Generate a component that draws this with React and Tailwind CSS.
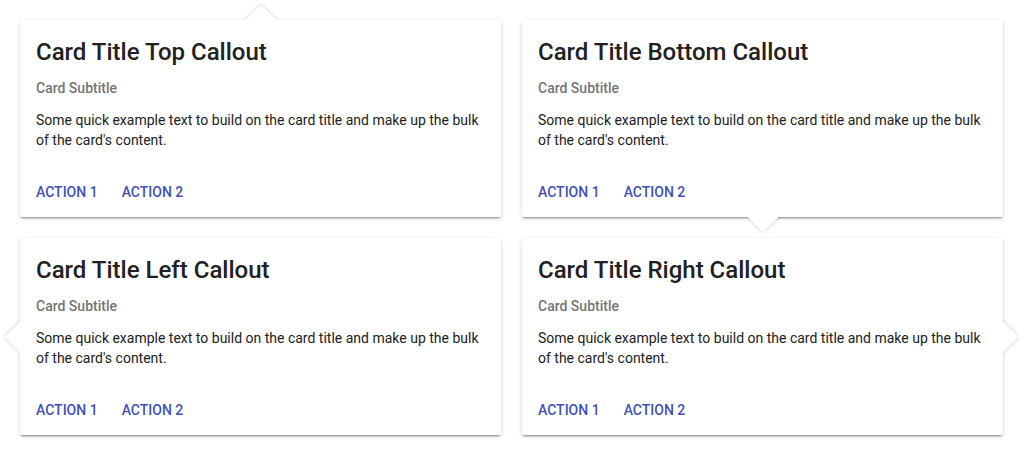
import React from "react";

const shadow =
  "shadow-[0_2px_2px_0_rgba(0,0,0,0.14),0_3px_1px_-2px_rgba(0,0,0,0.2),0_1px_5px_0_rgba(0,0,0,0.12)]";
const arrowShadow = "shadow-[0_0_4px_0_rgba(0,0,0,0.22)]";

function Arrow({ side }) {
  if (side === "top")
    return (
      <div className="absolute left-1/2 -translate-x-1/2 -top-[16px] w-[36px] h-[16px] overflow-hidden">
        <div className={`absolute left-1/2 top-[16px] w-[22px] h-[22px] bg-white rotate-45 -translate-x-1/2 -translate-y-1/2 ${arrowShadow}`} />
      </div>
    );
  if (side === "bottom")
    return (
      <div className="absolute left-1/2 -translate-x-1/2 top-full w-[36px] h-[16px] overflow-hidden">
        <div className={`absolute left-1/2 top-0 w-[22px] h-[22px] bg-white rotate-45 -translate-x-1/2 -translate-y-1/2 ${arrowShadow}`} />
      </div>
    );
  if (side === "left")
    return (
      <div className="absolute top-1/2 -translate-y-1/2 -left-[16px] w-[16px] h-[36px] overflow-hidden">
        <div className={`absolute top-1/2 left-[16px] w-[22px] h-[22px] bg-white rotate-45 -translate-x-1/2 -translate-y-1/2 ${arrowShadow}`} />
      </div>
    );
  return (
    <div className="absolute top-1/2 -translate-y-1/2 left-full w-[16px] h-[36px] overflow-hidden">
      <div className={`absolute top-1/2 left-0 w-[22px] h-[22px] bg-white rotate-45 -translate-x-1/2 -translate-y-1/2 ${arrowShadow}`} />
    </div>
  );
}

function Card({ title, side }) {
  return (
    <div className={`relative bg-white rounded-[2px] ${shadow}`}>
      <div className="px-4 pt-4 pb-[15px]">
        <h2 className="text-[24px] leading-[32px] font-medium text-[#212121]">{title}</h2>
        <div className="mt-[10px] text-[14px] leading-[20px] font-medium text-[#757575]">Card Subtitle</div>
        <p className="mt-3 text-[14px] leading-[20px] text-[#212121]">
          Some quick example text to build on the card title and make up the bulk of the card's content.
        </p>
      </div>
      <div className="flex items-center gap-2 px-2 pt-[9px] pb-[7px]">
        <button className="h-9 px-2 text-[14px] font-medium uppercase text-[#3f51b5]">Action 1</button>
        <button className="h-9 px-2 text-[14px] font-medium uppercase text-[#3f51b5]">Action 2</button>
      </div>
      <Arrow side={side} />
    </div>
  );
}

export default function App() {
  return (
    <div className="w-[1024px] h-[456px] bg-white px-5 pt-5" style={{ fontFamily: "Roboto, 'Noto Sans', sans-serif" }}>
      <div className="grid grid-cols-[481px_481px] gap-[21px]">
        <Card title="Card Title Top Callout" side="top" />
        <Card title="Card Title Bottom Callout" side="bottom" />
        <Card title="Card Title Left Callout" side="left" />
        <Card title="Card Title Right Callout" side="right" />
      </div>
    </div>
  );
}
